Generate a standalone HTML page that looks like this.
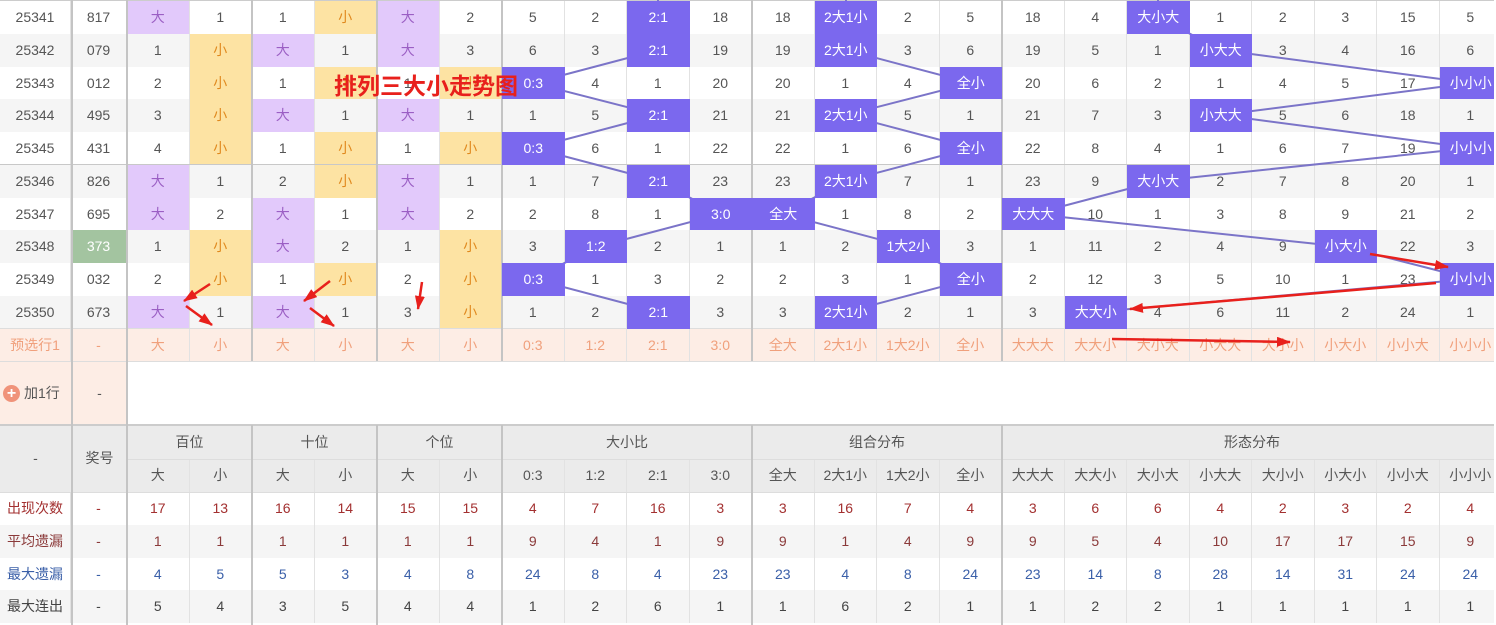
<!DOCTYPE html>
<html><head><meta charset="utf-8">
<style>
body{margin:0;width:1496px;height:625px;overflow:hidden;background:#fff;position:relative;font-family:"Liberation Sans","Noto Sans CJK SC",sans-serif;font-size:14px;color:#555}
.r{position:absolute;left:0;height:32.75px;display:flex;width:1502px}
.r>div{width:62.5px;flex:none;text-align:center;line-height:32.75px;border-right:1px solid #e2e2e2;box-sizing:border-box;height:100%}
.r>div:nth-child(1){width:71px}
.r>div:nth-child(2){width:56px}
.w{background:#fff}.g{background:#f5f5f5}
.p{background:#e2c9fb;color:#9b5fc4}
.y{background:#fde3a3;color:#e0891e}
.pre{background:#fdede5;color:#f0a07c}
.bl{position:absolute;width:62.5px;height:32.75px;background:#7b68ee;color:#fff;text-align:center;line-height:32.75px}
.vl{position:absolute;width:2px;background:#c4c4c4}
.hl{position:absolute;left:0;width:1496px}
.hd{position:absolute;background:#ebebeb;text-align:center;color:#555}
</style></head><body>

<div class="r w" style="top:1px"><div>25341</div><div>817</div><div class="p">大</div><div>1</div><div>1</div><div class="y">小</div><div class="p">大</div><div>2</div><div>5</div><div>2</div><div></div><div>18</div><div>18</div><div></div><div>2</div><div>5</div><div>18</div><div>4</div><div></div><div>1</div><div>2</div><div>3</div><div>15</div><div>5</div></div>
<div class="r g" style="top:33.75px"><div>25342</div><div>079</div><div>1</div><div class="y">小</div><div class="p">大</div><div>1</div><div class="p">大</div><div>3</div><div>6</div><div>3</div><div></div><div>19</div><div>19</div><div></div><div>3</div><div>6</div><div>19</div><div>5</div><div>1</div><div></div><div>3</div><div>4</div><div>16</div><div>6</div></div>
<div class="r w" style="top:66.5px"><div>25343</div><div>012</div><div>2</div><div class="y">小</div><div>1</div><div class="y">小</div><div>1</div><div class="y">小</div><div></div><div>4</div><div>1</div><div>20</div><div>20</div><div>1</div><div>4</div><div></div><div>20</div><div>6</div><div>2</div><div>1</div><div>4</div><div>5</div><div>17</div><div></div></div>
<div class="r g" style="top:99.25px"><div>25344</div><div>495</div><div>3</div><div class="y">小</div><div class="p">大</div><div>1</div><div class="p">大</div><div>1</div><div>1</div><div>5</div><div></div><div>21</div><div>21</div><div></div><div>5</div><div>1</div><div>21</div><div>7</div><div>3</div><div></div><div>5</div><div>6</div><div>18</div><div>1</div></div>
<div class="r w" style="top:132px"><div>25345</div><div>431</div><div>4</div><div class="y">小</div><div>1</div><div class="y">小</div><div>1</div><div class="y">小</div><div></div><div>6</div><div>1</div><div>22</div><div>22</div><div>1</div><div>6</div><div></div><div>22</div><div>8</div><div>4</div><div>1</div><div>6</div><div>7</div><div>19</div><div></div></div>
<div class="r g" style="top:164.75px"><div>25346</div><div>826</div><div class="p">大</div><div>1</div><div>2</div><div class="y">小</div><div class="p">大</div><div>1</div><div>1</div><div>7</div><div></div><div>23</div><div>23</div><div></div><div>7</div><div>1</div><div>23</div><div>9</div><div></div><div>2</div><div>7</div><div>8</div><div>20</div><div>1</div></div>
<div class="r w" style="top:197.5px"><div>25347</div><div>695</div><div class="p">大</div><div>2</div><div class="p">大</div><div>1</div><div class="p">大</div><div>2</div><div>2</div><div>8</div><div>1</div><div></div><div></div><div>1</div><div>8</div><div>2</div><div></div><div>10</div><div>1</div><div>3</div><div>8</div><div>9</div><div>21</div><div>2</div></div>
<div class="r g" style="top:230.25px"><div>25348</div><div style="background:#a3c4a0;color:#fff">373</div><div>1</div><div class="y">小</div><div class="p">大</div><div>2</div><div>1</div><div class="y">小</div><div>3</div><div></div><div>2</div><div>1</div><div>1</div><div>2</div><div></div><div>3</div><div>1</div><div>11</div><div>2</div><div>4</div><div>9</div><div></div><div>22</div><div>3</div></div>
<div class="r w" style="top:263px"><div>25349</div><div>032</div><div>2</div><div class="y">小</div><div>1</div><div class="y">小</div><div>2</div><div class="y">小</div><div></div><div>1</div><div>3</div><div>2</div><div>2</div><div>3</div><div>1</div><div></div><div>2</div><div>12</div><div>3</div><div>5</div><div>10</div><div>1</div><div>23</div><div></div></div>
<div class="r g" style="top:295.75px"><div>25350</div><div>673</div><div class="p">大</div><div>1</div><div class="p">大</div><div>1</div><div>3</div><div class="y">小</div><div>1</div><div>2</div><div></div><div>3</div><div>3</div><div></div><div>2</div><div>1</div><div>3</div><div></div><div>4</div><div>6</div><div>11</div><div>2</div><div>24</div><div>1</div></div>
<div class="r pre" style="top:328.5px"><div>预选行1</div><div>-</div><div>大</div><div>小</div><div>大</div><div>小</div><div>大</div><div>小</div><div>0:3</div><div>1:2</div><div>2:1</div><div>3:0</div><div>全大</div><div>2大1小</div><div>1大2小</div><div>全小</div><div>大大大</div><div>大大小</div><div>大小大</div><div>小大大</div><div>大小小</div><div>小大小</div><div>小小大</div><div>小小小</div></div>

<div style="position:absolute;left:0;top:361px;width:127px;height:64px;background:#fdede5"></div>
<div style="position:absolute;left:3px;top:385px;width:17px;height:17px;border-radius:50%;background:#f0937a;color:#fff;font-size:16px;line-height:17px;text-align:center;font-weight:bold">+</div>
<div style="position:absolute;left:24px;top:383px;line-height:20px;color:#555">加1行</div>
<div style="position:absolute;left:72px;top:383px;width:55px;text-align:center;line-height:20px">-</div>

<!-- header -->
<div class="hd" style="left:0;top:425px;width:1496px;height:67px"></div>
<div class="hd" style="left:127px;top:425px;width:125px;line-height:34px">百位</div>
<div class="hd" style="left:252px;top:425px;width:125px;line-height:34px">十位</div>
<div class="hd" style="left:377px;top:425px;width:125px;line-height:34px">个位</div>
<div class="hd" style="left:502px;top:425px;width:250px;line-height:34px">大小比</div>
<div class="hd" style="left:752px;top:425px;width:250px;line-height:34px">组合分布</div>
<div class="hd" style="left:1002px;top:425px;width:500px;line-height:34px">形态分布</div>
<div class="r" style="top:459px;height:33px;background:#ebebeb"><div style="border:0"></div><div style="border:0"></div><div>大</div><div>小</div><div>大</div><div>小</div><div>大</div><div>小</div><div>0:3</div><div>1:2</div><div>2:1</div><div>3:0</div><div>全大</div><div>2大1小</div><div>1大2小</div><div>全小</div><div>大大大</div><div>大大小</div><div>大小大</div><div>小大大</div><div>大小小</div><div>小大小</div><div>小小大</div><div>小小小</div></div>
<div style="position:absolute;left:0;top:425px;width:71px;height:67px;line-height:67px;text-align:center">-</div>
<div style="position:absolute;left:72px;top:425px;width:55px;height:67px;line-height:67px;text-align:center">奖号</div>

<div class="r w" style="top:492px;color:#a33030"><div>出现次数</div><div>-</div><div>17</div><div>13</div><div>16</div><div>14</div><div>15</div><div>15</div><div>4</div><div>7</div><div>16</div><div>3</div><div>3</div><div>16</div><div>7</div><div>4</div><div>3</div><div>6</div><div>6</div><div>4</div><div>2</div><div>3</div><div>2</div><div>4</div></div>
<div class="r g" style="top:524.75px;color:#8b3a3a"><div>平均遗漏</div><div>-</div><div>1</div><div>1</div><div>1</div><div>1</div><div>1</div><div>1</div><div>9</div><div>4</div><div>1</div><div>9</div><div>9</div><div>1</div><div>4</div><div>9</div><div>9</div><div>5</div><div>4</div><div>10</div><div>17</div><div>17</div><div>15</div><div>9</div></div>
<div class="r w" style="top:557.5px;color:#3a5fa8"><div>最大遗漏</div><div>-</div><div>4</div><div>5</div><div>5</div><div>3</div><div>4</div><div>8</div><div>24</div><div>8</div><div>4</div><div>23</div><div>23</div><div>4</div><div>8</div><div>24</div><div>23</div><div>14</div><div>8</div><div>28</div><div>14</div><div>31</div><div>24</div><div>24</div></div>
<div class="r g" style="top:590.25px;color:#444"><div>最大连出</div><div>-</div><div>5</div><div>4</div><div>3</div><div>5</div><div>4</div><div>4</div><div>1</div><div>2</div><div>6</div><div>1</div><div>1</div><div>6</div><div>2</div><div>1</div><div>1</div><div>2</div><div>2</div><div>1</div><div>1</div><div>1</div><div>1</div><div>1</div></div>

<!-- horizontal lines -->
<div class="hl" style="top:0;height:1px;background:#ccc"></div>
<div class="hl" style="top:164px;height:1px;background:#c8c8c8"></div>
<div class="hl" style="top:328px;height:1px;background:#ddd"></div>
<div class="hl" style="top:361px;height:1px;background:#ddd"></div>
<div class="hl" style="top:424px;height:2px;background:#ccc"></div>
<div style="position:absolute;left:127px;top:459px;width:1370px;height:1px;background:#ddd"></div>
<div class="hl" style="top:492px;height:1px;background:#ddd"></div>

<!-- vertical thick lines -->
<div class="vl" style="left:71px;top:0;height:625px"></div>
<div class="vl" style="left:126px;top:0;height:625px"></div>
<div class="vl" style="left:251px;top:0;height:361px"></div><div class="vl" style="left:251px;top:425px;height:200px"></div>
<div class="vl" style="left:376px;top:0;height:361px"></div><div class="vl" style="left:376px;top:425px;height:200px"></div>
<div class="vl" style="left:501px;top:0;height:361px"></div><div class="vl" style="left:501px;top:425px;height:200px"></div>
<div class="vl" style="left:751px;top:0;height:361px"></div><div class="vl" style="left:751px;top:425px;height:200px"></div>
<div class="vl" style="left:1001px;top:0;height:361px"></div><div class="vl" style="left:1001px;top:425px;height:200px"></div>

<svg style="position:absolute;left:0;top:0" width="1496" height="625">
<g stroke="#7b74c8" stroke-width="2" fill="none">
<polyline points="658,0 658,17 658,50 533,83 658,115 533,148 658,181 721,214 596,247 533,279 658,312"/>
<polyline points="846,0 846,17 846,50 971,83 846,115 971,148 846,181 783,214 908,247 971,279 846,312"/>
<polyline points="1158,0 1158,17 1221,50 1471,83 1221,115 1471,148 1158,181 1033,214 1346,247 1471,279 1096,312"/>
</g>
</svg>

<!-- blue cells -->
<div class="bl" style="left:627px;top:1px">2:1</div>
<div class="bl" style="left:627px;top:33.75px">2:1</div>
<div class="bl" style="left:502px;top:66.5px">0:3</div>
<div class="bl" style="left:627px;top:99.25px">2:1</div>
<div class="bl" style="left:502px;top:132px">0:3</div>
<div class="bl" style="left:627px;top:164.75px">2:1</div>
<div class="bl" style="left:689.5px;top:197.5px">3:0</div>
<div class="bl" style="left:564.5px;top:230.25px">1:2</div>
<div class="bl" style="left:502px;top:263px">0:3</div>
<div class="bl" style="left:627px;top:295.75px">2:1</div>

<div class="bl" style="left:814.5px;top:1px">2大1小</div>
<div class="bl" style="left:814.5px;top:33.75px">2大1小</div>
<div class="bl" style="left:939.5px;top:66.5px">全小</div>
<div class="bl" style="left:814.5px;top:99.25px">2大1小</div>
<div class="bl" style="left:939.5px;top:132px">全小</div>
<div class="bl" style="left:814.5px;top:164.75px">2大1小</div>
<div class="bl" style="left:752px;top:197.5px">全大</div>
<div class="bl" style="left:877px;top:230.25px">1大2小</div>
<div class="bl" style="left:939.5px;top:263px">全小</div>
<div class="bl" style="left:814.5px;top:295.75px">2大1小</div>

<div class="bl" style="left:1127px;top:1px">大小大</div>
<div class="bl" style="left:1189.5px;top:33.75px">小大大</div>
<div class="bl" style="left:1439.5px;top:66.5px">小小小</div>
<div class="bl" style="left:1189.5px;top:99.25px">小大大</div>
<div class="bl" style="left:1439.5px;top:132px">小小小</div>
<div class="bl" style="left:1127px;top:164.75px">大小大</div>
<div class="bl" style="left:1002px;top:197.5px">大大大</div>
<div class="bl" style="left:1314.5px;top:230.25px">小大小</div>
<div class="bl" style="left:1439.5px;top:263px">小小小</div>
<div class="bl" style="left:1064.5px;top:295.75px">大大小</div>

<div style="position:absolute;left:1494px;top:0;width:2px;height:625px;background:#fff"></div>

<div style="position:absolute;left:334px;top:70px;color:#e8201c;font-weight:bold;font-size:23px;line-height:28px;font-family:'Noto Sans CJK SC',sans-serif;white-space:nowrap">排列三大小走势图</div>

<svg style="position:absolute;left:0;top:0" width="1496" height="625">
<defs>
<marker id="b" markerWidth="14" markerHeight="10" refX="13" refY="5" orient="auto" markerUnits="userSpaceOnUse"><path d="M0,0 L14,5 L0,10 z" fill="#e8201c"/></marker></defs>
<g stroke="#e8201c" stroke-width="2.5" fill="none">
<line x1="210" y1="284" x2="184" y2="301" marker-end="url(#b)"/>
<line x1="186" y1="306" x2="212" y2="325" marker-end="url(#b)"/>
<line x1="330" y1="281" x2="304" y2="301" marker-end="url(#b)"/>
<line x1="310" y1="308" x2="334" y2="326" marker-end="url(#b)"/>
<line x1="422" y1="282" x2="418" y2="309" marker-end="url(#b)"/>
<line x1="1370" y1="254" x2="1448" y2="267" marker-end="url(#b)"/>
<line x1="1436" y1="283" x2="1130" y2="309" marker-end="url(#b)"/>
<line x1="1112" y1="339" x2="1290" y2="342" marker-end="url(#b)"/>
</g>
</svg>
</body></html>
